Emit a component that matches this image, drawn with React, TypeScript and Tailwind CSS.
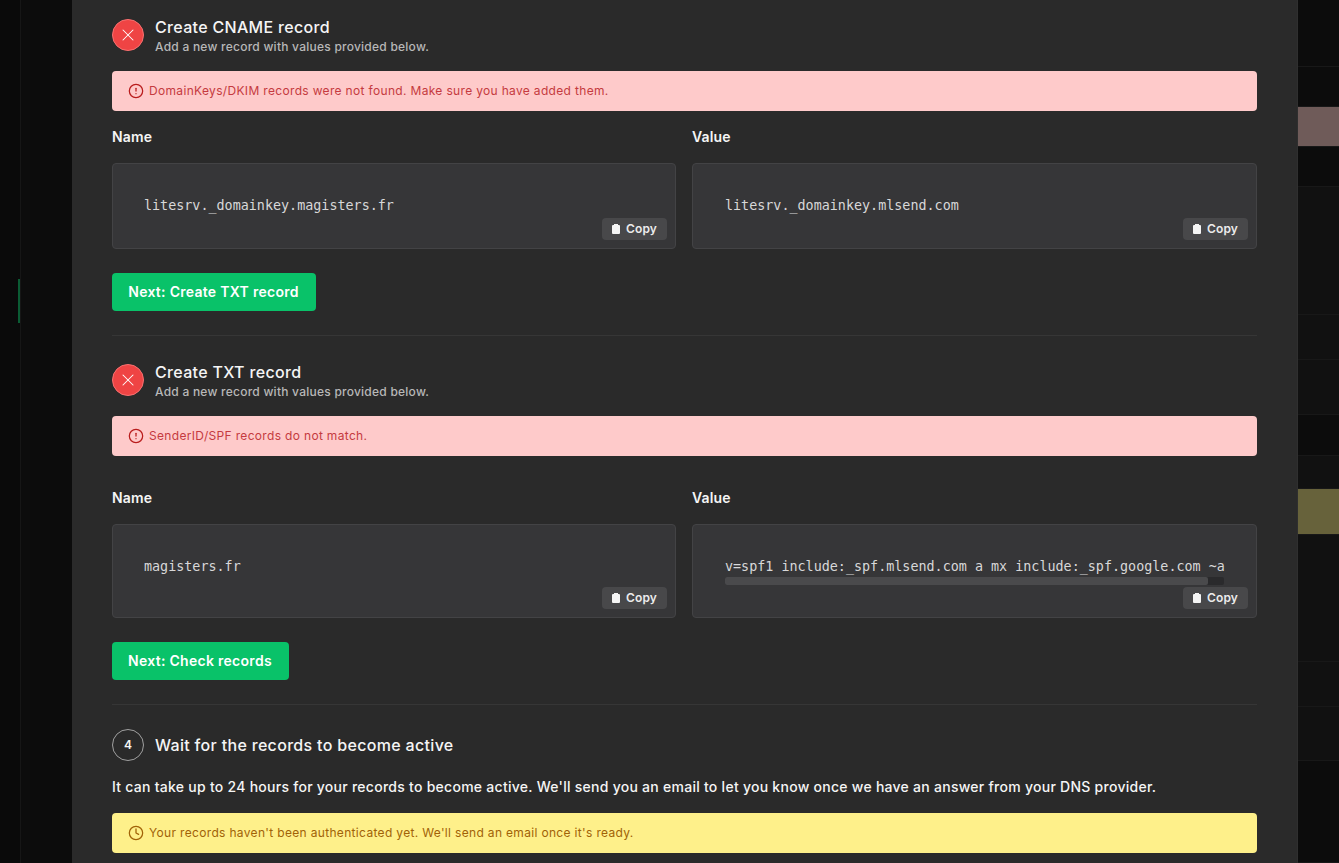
import { CircleAlert, Clock, X } from 'lucide-react';

const sideRows = [
  { h: 'h-[67px]', bg: 'bg-[#0c0c0c]' },
  { h: 'h-[40px]', bg: 'bg-[#0c0c0c]' },
  { h: 'h-[40px]', bg: 'bg-[#6f5b59]' },
  { h: 'h-[40px]', bg: 'bg-[#0c0c0c]' },
  { h: 'h-[128px]', bg: 'bg-[#111111]' },
  { h: 'h-[45px]', bg: 'bg-[#111111]' },
  { h: 'h-[55px]', bg: 'bg-[#111111]' },
  { h: 'h-[41px]', bg: 'bg-[#0c0c0c]' },
  { h: 'h-[33px]', bg: 'bg-[#111111]' },
  { h: 'h-[46px]', bg: 'bg-[#67623b]' },
  { h: 'h-[127px]', bg: 'bg-[#111111]' },
  { h: 'h-[45px]', bg: 'bg-[#111111]' },
  { h: 'h-[54px]', bg: 'bg-[#111111]' },
  { h: 'h-[102px]', bg: 'bg-[#0c0c0c]' },
];

function CopyButton() {
  return (
    <button className="absolute right-[8px] bottom-[8px] flex h-[22px] w-[65px] items-center justify-center gap-[6px] rounded-[4px] bg-[#48484a] text-[12px] font-semibold tracking-[0.01em] text-[#ececec]">
      <svg width="8" height="10" viewBox="0 0 8 10" fill="#f5f5f5">
        <path d="M2 0h4v1h1a1 1 0 0 1 1 1v7a1 1 0 0 1-1 1H1a1 1 0 0 1-1-1V2a1 1 0 0 1 1-1h1z" />
      </svg>
      Copy
    </button>
  );
}

function CodeBox({ value, height, pad, scroll }: { value: string; height: string; pad: string; scroll?: boolean }) {
  return (
    <div className={`relative w-full rounded-[4px] border border-[#434345] bg-[#363638] ${height}`}>
      <div className={`pt-[33px] font-['DejaVu_Sans_Mono',monospace] text-[13.4px] leading-[17px] whitespace-pre text-[#d8d8d8] ${pad}`}>
        {value}
      </div>
      {scroll && (
        <div className="mt-[2px] ml-[32px] h-[8px] w-[499px] rounded-[2px] bg-[#2a2a2c]">
          <div className="h-full w-[483px] rounded-[2px] bg-[#4a4a4c]" />
        </div>
      )}
      <CopyButton />
    </div>
  );
}

function RecordFields({ name, value, box, scroll }: { name: string; value: string; box: string; scroll?: boolean }) {
  return (
    <div className="flex gap-[16px]">
      <div className="flex w-[564px] flex-col">
        <div className="mb-[16px] text-[14px] leading-[20px] font-semibold tracking-[0.01em] text-[#f5f5f5]">Name</div>
        <CodeBox value={name} height={box} pad="pl-[31px]" />
      </div>
      <div className="flex flex-1 flex-col">
        <div className="mb-[16px] text-[14px] leading-[20px] font-semibold tracking-[0.01em] text-[#f5f5f5]">Value</div>
        <CodeBox value={value} height={box} pad="pl-[32px]" scroll={scroll} />
      </div>
    </div>
  );
}

function ErrorHeader({ title }: { title: string }) {
  return (
    <div className="flex items-start gap-[11px]">
      <div className="mt-[1px] flex h-[32px] w-[32px] items-center justify-center rounded-full border border-[#f87171] bg-[#ef4444]">
        <X size={20} strokeWidth={1.25} color="#ffffff" />
      </div>
      <div>
        <div className="text-[16px] leading-[18px] font-medium tracking-[0.02em] text-[#f5f5f5]">{title}</div>
        <div className="mt-[3px] text-[12px] leading-[16px] font-medium tracking-[0.02em] text-[#b8b8b8]">
          Add a new record with values provided below.
        </div>
      </div>
    </div>
  );
}

function ErrorAlert({ text }: { text: string }) {
  return (
    <div className="flex h-[40px] items-center gap-[5px] rounded-[4px] bg-[#fecaca] pl-[16px] text-[12px] tracking-[0.33px] text-[#c53a40]">
      <CircleAlert size={16} strokeWidth={1.9} color="#b91c1c" />
      {text}
    </div>
  );
}

function NextButton({ label, width }: { label: string; width: string }) {
  return (
    <button className={`flex h-[38px] items-center justify-center rounded-[4px] bg-[#09c269] pr-[1px] pb-[1px] text-[14px] font-semibold tracking-[0.02em] text-white ${width}`}>
      {label}
    </button>
  );
}

export default function App() {
  return (
    <div className="flex h-[863px] overflow-hidden bg-[#0c0c0c] font-['Inter',sans-serif]">
      <aside className="flex h-full w-[21px] shrink-0 flex-col border-r border-r-[#161616] bg-[#0a0a0a]">
        <div className="mt-[279px] ml-[18px] h-[44px] w-[2px] bg-[#0b5c34]" />
      </aside>
      <div className="w-[51px] shrink-0" />

      <main className="h-full w-[1225px] shrink-0 bg-[#2a2a2a] px-[40px] pt-[18px]">
        <ErrorHeader title="Create CNAME record" />
        <div className="mt-[16px]">
          <ErrorAlert text="DomainKeys/DKIM records were not found. Make sure you have added them." />
        </div>
        <div className="mt-[16px]">
          <RecordFields name="litesrv._domainkey.magisters.fr" value="litesrv._domainkey.mlsend.com" box="h-[86px]" />
        </div>
        <div className="mt-[24px]">
          <NextButton label="Next: Create TXT record" width="w-[204px]" />
        </div>
        <div className="mt-[24px] border-t border-t-[#363636]" />

        <div className="mt-[27px]">
          <ErrorHeader title="Create TXT record" />
        </div>
        <div className="mt-[16px]">
          <ErrorAlert text="SenderID/SPF records do not match." />
        </div>
        <div className="mt-[32px]">
          <RecordFields
            name="magisters.fr"
            value="v=spf1 include:_spf.mlsend.com a mx include:_spf.google.com ~a"
            box="h-[94px]"
            scroll
          />
        </div>
        <div className="mt-[24px]">
          <NextButton label="Next: Check records" width="w-[177px]" />
        </div>
        <div className="mt-[24px] border-t border-t-[#363636]" />

        <div className="mt-[24px] flex items-center gap-[11px]">
          <div className="flex h-[32px] w-[32px] items-center justify-center rounded-full border border-[#a0a0a0] text-[12px] font-semibold text-[#f5f5f5]">
            4
          </div>
          <div className="text-[16px] font-medium tracking-[0.02em] text-[#f5f5f5]">Wait for the records to become active</div>
        </div>
        <p className="mt-[16px] text-[14px] leading-[20px] font-medium tracking-[0.266px] text-[#f5f5f5]">
          It can take up to 24 hours for your records to become active. We'll send you an email to let you know once we have an answer from your DNS provider.
        </p>
        <div className="mt-[16px] flex h-[40px] items-center gap-[5px] rounded-[4px] bg-[#fef08a] pl-[16px] text-[12px] tracking-[0.33px] text-[#a16207]">
          <Clock size={16} strokeWidth={1.9} color="#a16207" />
          Your records haven't been authenticated yet. We'll send an email once it's ready.
        </div>
      </main>

      <div className="flex flex-1 flex-col border-l border-l-[#2f2f2f]">
        {sideRows.map((row, i) => (
          <div key={i} className={`${row.h} ${row.bg} border-b border-b-[#181818]`} />
        ))}
      </div>
    </div>
  );
}
